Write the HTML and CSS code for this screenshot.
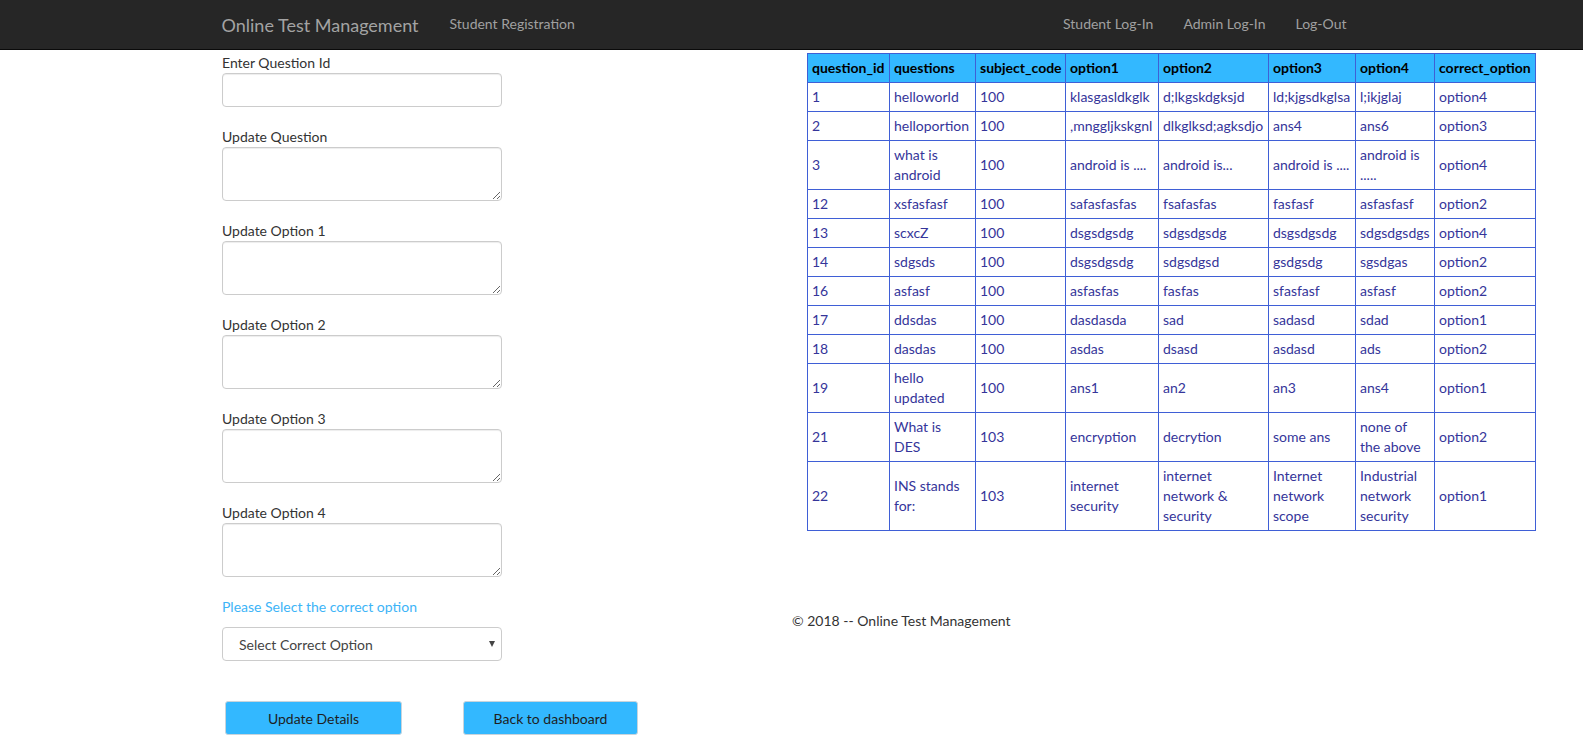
FILE: index.html
```html
<!DOCTYPE html>
<html lang="en">
<head>
<meta charset="utf-8">
<title>Update Question</title>
<link rel="stylesheet" href="styles.css">
</head>
<body>
<nav class="navbar">
  <div class="nav-inner">
    <a class="brand" href="#">Online Test Management</a>
    <a class="nav-link" href="#">Student Registration</a>
    <div class="nav-right">
      <a class="nav-link" href="#">Student Log-In</a>
      <a class="nav-link" href="#">Admin Log-In</a>
      <a class="nav-link" href="#">Log-Out</a>
    </div>
  </div>
</nav>

<div class="main">
  <form class="form-col">
    <div class="field">
      <label>Enter Question Id</label>
      <input type="text" class="control input">
    </div>
    <div class="field">
      <label>Update Question</label>
      <textarea class="control area"></textarea>
    </div>
    <div class="field">
      <label>Update Option 1</label>
      <textarea class="control area"></textarea>
    </div>
    <div class="field">
      <label>Update Option 2</label>
      <textarea class="control area"></textarea>
    </div>
    <div class="field">
      <label>Update Option 3</label>
      <textarea class="control area"></textarea>
    </div>
    <div class="field">
      <label>Update Option 4</label>
      <textarea class="control area"></textarea>
    </div>
    <div class="select-label">Please Select the correct option</div>
    <div class="select-wrap">
      <select class="control select">
        <option>Select Correct Option</option>
        <option>option1</option>
        <option>option2</option>
        <option>option3</option>
        <option>option4</option>
      </select>
    </div>
    <div class="buttons">
      <button type="button" class="btn btn-update">Update Details</button>
      <button type="button" class="btn btn-back">Back to dashboard</button>
    </div>
  </form>

  <div class="table-col">
    <table class="qtable">
      <colgroup>
        <col class="c1"><col class="c2"><col class="c3"><col class="c4">
        <col class="c5"><col class="c6"><col class="c7"><col class="c8">
      </colgroup>
      <thead>
        <tr>
          <th>question_id</th><th>questions</th><th>subject_code</th><th>option1</th>
          <th>option2</th><th>option3</th><th>option4</th><th>correct_option</th>
        </tr>
      </thead>
      <tbody>
        <tr><td>1</td><td>helloworld</td><td>100</td><td>klasgasldkglk</td><td>d;lkgskdgksjd</td><td>ld;kjgsdkglsa</td><td>l;ikjglaj</td><td>option4</td></tr>
        <tr><td>2</td><td>helloportion</td><td>100</td><td>,mnggljkskgnl</td><td>dlkglksd;agksdjo</td><td>ans4</td><td>ans6</td><td>option3</td></tr>
        <tr><td>3</td><td>what is<br>android</td><td>100</td><td>android is ....</td><td>android is...</td><td>android is ....</td><td>android is<br>.....</td><td>option4</td></tr>
        <tr><td>12</td><td>xsfasfasf</td><td>100</td><td>safasfasfas</td><td>fsafasfas</td><td>fasfasf</td><td>asfasfasf</td><td>option2</td></tr>
        <tr><td>13</td><td>scxcZ</td><td>100</td><td>dsgsdgsdg</td><td>sdgsdgsdg</td><td>dsgsdgsdg</td><td>sdgsdgsdgs</td><td>option4</td></tr>
        <tr><td>14</td><td>sdgsds</td><td>100</td><td>dsgsdgsdg</td><td>sdgsdgsd</td><td>gsdgsdg</td><td>sgsdgas</td><td>option2</td></tr>
        <tr><td>16</td><td>asfasf</td><td>100</td><td>asfasfas</td><td>fasfas</td><td>sfasfasf</td><td>asfasf</td><td>option2</td></tr>
        <tr><td>17</td><td>ddsdas</td><td>100</td><td>dasdasda</td><td>sad</td><td>sadasd</td><td>sdad</td><td>option1</td></tr>
        <tr><td>18</td><td>dasdas</td><td>100</td><td>asdas</td><td>dsasd</td><td>asdasd</td><td>ads</td><td>option2</td></tr>
        <tr><td>19</td><td>hello<br>updated</td><td>100</td><td>ans1</td><td>an2</td><td>an3</td><td>ans4</td><td>option1</td></tr>
        <tr><td>21</td><td>What is<br>DES</td><td>103</td><td>encryption</td><td>decrytion</td><td>some ans</td><td>none of<br>the above</td><td>option2</td></tr>
        <tr><td>22</td><td>INS stands<br>for:</td><td>103</td><td>internet<br>security</td><td>internet<br>network &amp;<br>security</td><td>Internet<br>network<br>scope</td><td>Industrial<br>network<br>security</td><td>option1</td></tr>
      </tbody>
    </table>
    <footer class="footer">&copy; 2018 -- Online Test Management</footer>
  </div>
</div>
</body>
</html>
```

FILE: styles.css
```css
* { box-sizing: border-box; }

body {
  margin: 0;
  font-family: Lato, "Open Sans", "Liberation Sans", sans-serif;
  font-size: 14px;
  line-height: 20px;
  color: #333;
  background: #fff;
}

/* Navbar */
.navbar {
  height: 50px;
  background: #262626;
  border-bottom: 1px solid #0a0a0a;
}
.nav-inner {
  width: 1170px;
  margin: 0 auto;
  padding: 0 15px;
  height: 49px;
  display: flex;
  align-items: center;
}
.brand {
  font-size: 18px;
  color: #a3a3a3;
  text-decoration: none;
  margin-right: 16px;
  line-height: 20px;
}
.nav-link {
  color: #a0a0a0;
  text-decoration: none;
  padding: 0 15px;
  font-size: 14px;
  line-height: 20px;
  margin-top: -2px;
}
.nav-right {
  margin-left: auto;
  display: flex;
}

/* Main layout */
.main {
  display: grid;
  grid-template-columns: 585px 728px;
  padding-left: 222px;
}

.form-col {
  padding-top: 3px;
}
.field {
  margin-bottom: 20px;
}
.field label {
  display: block;
  line-height: 20px;
  font-size: 14px;
  color: #333;
}
.control {
  display: block;
  width: 280px;
  border: 1px solid #ccc;
  border-radius: 4px;
  background: #fff;
  box-shadow: inset 0 1px 1px rgba(0, 0, 0, 0.075);
  font-family: inherit;
  font-size: 14px;
  color: #555;
}
.input { height: 34px; padding: 6px 12px; }
.area { height: 54px; padding: 6px 12px; resize: vertical; }

.select-label {
  color: #3db4f7;
  font-size: 14px;
  line-height: 20px;
}
.select-wrap {
  position: relative;
  width: 280px;
  margin-top: 10px;
}
.select {
  height: 34px;
  padding: 0 16px;
  -webkit-appearance: none;
  appearance: none;
  color: #444;
  box-shadow: none;
}
.select-wrap::after {
  content: "";
  position: absolute;
  right: 7px;
  top: 14px;
  border-left: 3.5px solid transparent;
  border-right: 3.5px solid transparent;
  border-top: 6px solid #444;
  pointer-events: none;
}

.buttons {
  display: flex;
  margin-top: 40px;
  padding-left: 3px;
}
.btn {
  height: 34px;
  background: #33b8ff;
  border: 1px solid #c8d4dc;
  border-radius: 3px;
  font-family: inherit;
  font-size: 14px;
  color: #1e1e1e;
  padding: 0;
}
.btn-update { width: 177px; }
.btn-back { width: 175px; margin-left: 61px; }

/* Table */
.table-col {
  padding-top: 3px;
}
.qtable {
  width: 728px;
  table-layout: fixed;
  border-collapse: collapse;
}
.c1 { width: 82px; }
.c2 { width: 86px; }
.c3 { width: 90px; }
.c4 { width: 93px; }
.c5 { width: 110px; }
.c6 { width: 87px; }
.c7 { width: 79px; }
.c8 { width: 101px; }

.qtable th,
.qtable td {
  border: 1px solid #3f5fd6;
  padding: 4px 4px;
  text-align: left;
  vertical-align: middle;
  white-space: nowrap;
  font-size: 14px;
  line-height: 20px;
}
.qtable th {
  background: #33b8ff;
  color: #000;
  font-weight: bold;
}
.qtable td {
  color: #35359a;
}

.footer {
  margin-top: 80px;
  margin-left: -15px;
  color: #333;
  font-size: 14px;
  line-height: 20px;
}
```
